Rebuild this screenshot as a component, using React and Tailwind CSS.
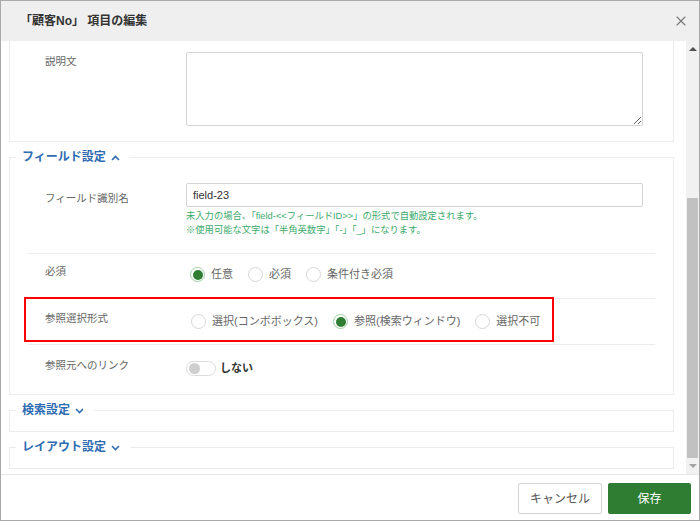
import React from "react";
import { X } from "lucide-react";

const FONT = { fontFamily: '"Liberation Sans", "Noto Sans CJK JP", sans-serif' };

function Chevron({ up }) {
  return (
    <svg width="9" height="6" viewBox="0 0 9 6" className="inline-block ml-[5px] align-middle">
      <polyline
        points={up ? "1,5 4.5,1.5 8,5" : "1,1 4.5,4.5 8,1"}
        fill="none"
        stroke="#2f6db3"
        strokeWidth="1.6"
      />
    </svg>
  );
}

function Radio({ label, checked }) {
  return (
    <label className="flex items-center gap-[6px] mr-[15px]">
      <span
        className={`w-[15px] h-[15px] rounded-full border bg-white flex items-center justify-center ${checked ? "border-[#9fcfa2]" : "border-[#d6d6d6]"}`}
      >
        {checked && <span className="w-[10px] h-[10px] rounded-full bg-[#2e7d32]" />}
      </span>
      <span className="text-[11px] text-[#666] leading-[15px]">{label}</span>
    </label>
  );
}

function Legend({ title, open }) {
  return (
    <legend className="ml-[6px] pl-[6px] pr-[10px] text-[12px] leading-[18px] font-bold text-[#2f6db3]">
      {title}
      <Chevron up={open} />
    </legend>
  );
}

function Row({ label, labelPad, children, border = true, className = "" }) {
  return (
    <div className={`relative flex mx-[18px] ${border ? "border-b border-[#ececec]" : ""} ${className}`}>
      <div className={`w-[158px] pl-[17px] text-[10.5px] leading-[16px] text-[#666] ${labelPad}`}>{label}</div>
      <div className="flex-1">{children}</div>
    </div>
  );
}

export default function App() {
  return (
    <div style={FONT} className="w-[700px] h-[521px] border border-[#a9a9a9] bg-white flex flex-col overflow-hidden">
      <div className="h-[40px] bg-[#efefef] flex items-center justify-between pl-[19px] pr-[10px]">
        <span className="text-[12px] font-bold text-[#333]">「顧客No」 項目の編集</span>
        <X size={16} strokeWidth={1.7} className="text-[#777]" />
      </div>

      <div className="h-[434px] flex border-b border-[#e6e6e6]">
        <div className="w-[685px] pl-[8px]">
          <div className="w-[665px] border-x border-b border-[#ececec] pt-[11px] pb-[15px]">
            <Row label="説明文" labelPad="pt-[1px]" border={false}>
              <textarea
                readOnly
                className="block w-[457px] h-[74px] border border-[#d4d4d4] rounded-[2px] bg-white"
              />
            </Row>
          </div>

          <fieldset className="w-[665px] mt-[6px] border border-[#ececec]">
            <Legend title="フィールド設定" open />
            <Row label="フィールド識別名" labelPad="pt-[24px]" className="pb-[16px]">
              <div className="pt-[17px]">
                <div className="w-[457px] h-[24px] border border-[#d4d4d4] rounded-[2px] flex items-center pl-[6px] text-[11px] text-[#333]">
                  field-23
                </div>
                <div className="mt-[2px] text-[9.3px] leading-[14px] text-[#3aaa6a]">
                  <div>未入力の場合、「field-&lt;&lt;フィールドID&gt;&gt;」の形式で自動設定されます。</div>
                  <div>※使用可能な文字は「半角英数字」「-」「_」になります。</div>
                </div>
              </div>
            </Row>
            <Row label="必須" labelPad="pt-[9px]" className="h-[45px]">
              <div className="flex pt-[13px] pl-[4px]">
                <Radio label="任意" checked />
                <Radio label="必須" />
                <Radio label="条件付き必須" />
              </div>
            </Row>
            <Row label="参照選択形式" labelPad="pt-[11px]" className="h-[46px]">
              <div className="flex pt-[15px] pl-[5px]">
                <Radio label="選択(コンボボックス)" />
                <Radio label="参照(検索ウィンドウ)" checked />
                <Radio label="選択不可" />
              </div>
              <div className="absolute left-[-4px] top-[-2px] w-[530px] h-[45px] border-2 border-[#ff0000]" />
            </Row>
            <Row label="参照元へのリンク" labelPad="pt-[12px]" border={false} className="h-[49px]">
              <div className="flex items-center pt-[15px] gap-[4px]">
                <span className="w-[30px] h-[15px] rounded-full border border-[#dcdcdc] bg-white flex items-center">
                  <span className="w-[11px] h-[11px] rounded-full bg-[#cfcfcf] ml-[2px]" />
                </span>
                <span className="text-[11px] font-bold text-[#333]">しない</span>
              </div>
            </Row>
          </fieldset>

          <fieldset className="w-[665px] mt-[6px] border border-[#ececec] pb-[12px]">
            <Legend title="検索設定" />
          </fieldset>

          <fieldset className="w-[665px] mt-[6px] border border-[#ececec] pb-[12px]">
            <Legend title="レイアウト設定" />
          </fieldset>
        </div>

        <div className="w-[13px] bg-[#f1f1f1] flex flex-col">
          <div className="h-[16px] flex items-center justify-center">
            <span className="w-0 h-0 border-x-[4px] border-x-transparent border-b-[4px] border-b-[#505050]" />
          </div>
          <div className="flex-1 pt-[141px] pl-[1px]">
            <div className="w-[11px] h-[260px] bg-[#c1c1c1]" />
          </div>
          <div className="h-[16px] flex items-center justify-center">
            <span className="w-0 h-0 border-x-[4px] border-x-transparent border-t-[4px] border-t-[#a3a3a3]" />
          </div>
        </div>
      </div>

      <div className="flex-1 flex justify-end items-start pt-[8px] pr-[8px] gap-[6px]">
        <button className="w-[84px] h-[31px] border border-[#d4d4d4] rounded-[2px] bg-white text-[12px] text-[#555]">
          キャンセル
        </button>
        <button className="w-[83px] h-[31px] rounded-[2px] bg-[#2e7d32] text-[12px] text-white">保存</button>
      </div>
    </div>
  );
}
